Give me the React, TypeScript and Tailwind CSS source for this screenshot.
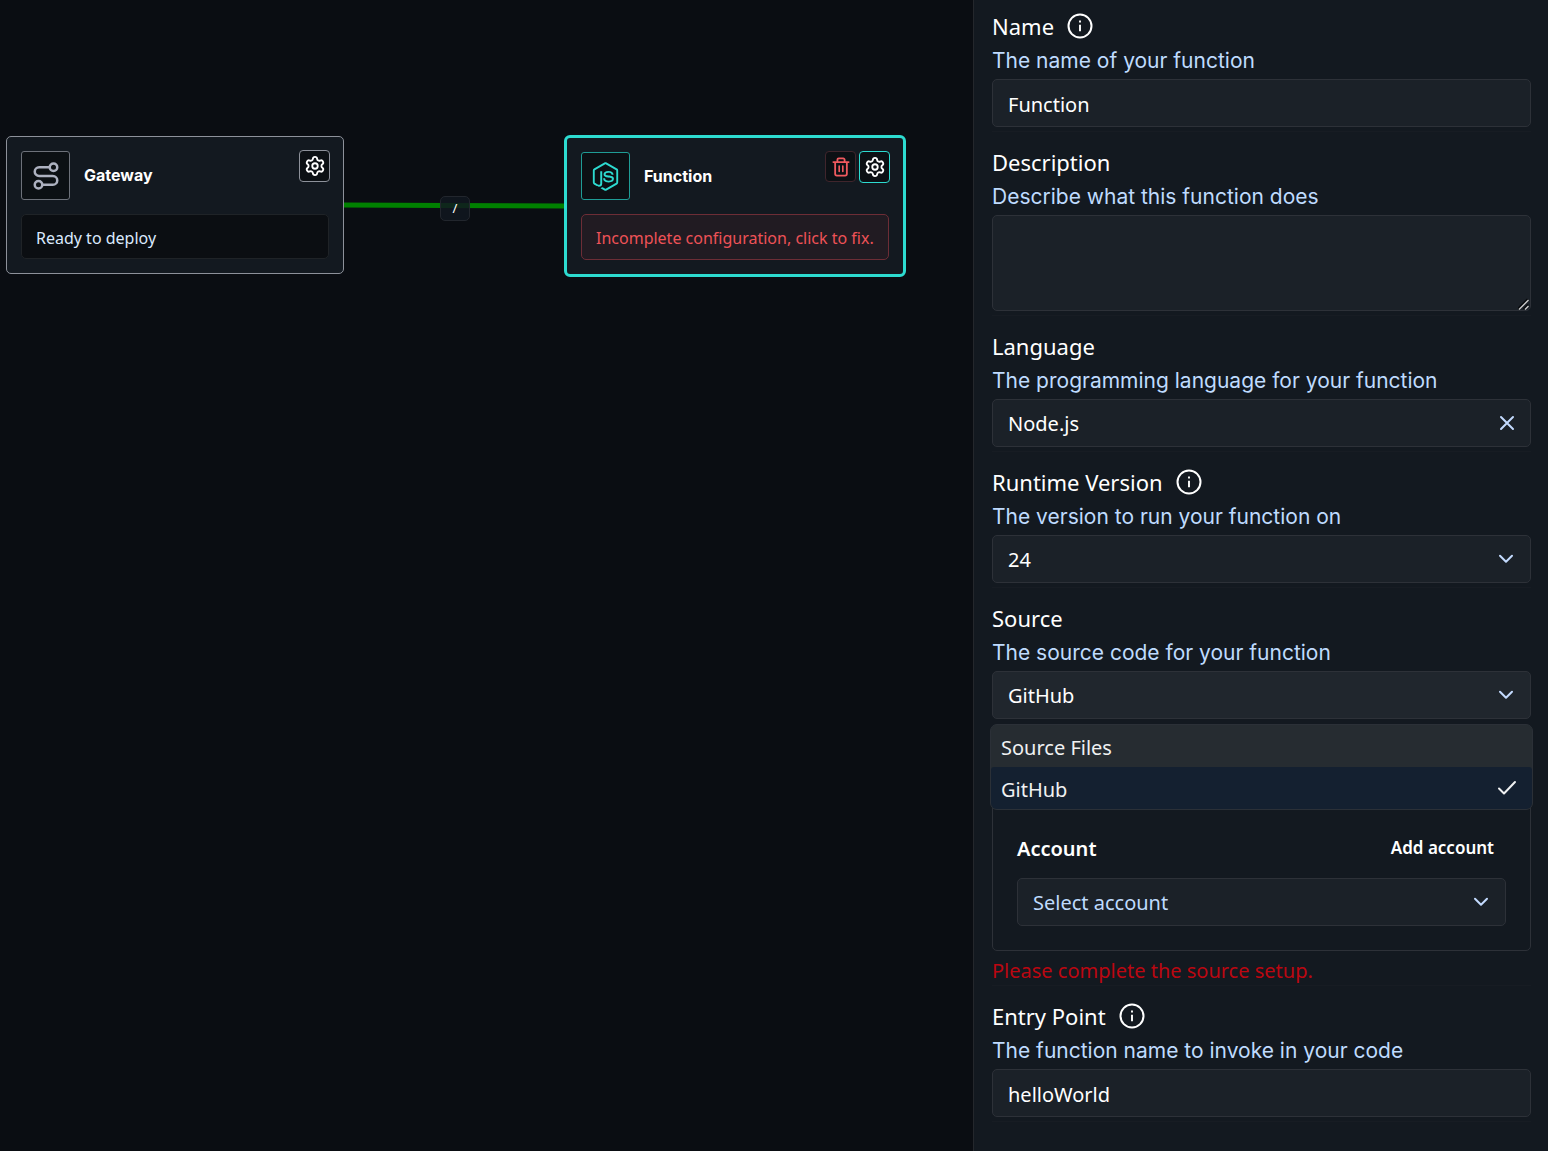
import { useState } from "react";
import type { ReactNode } from "react";
import { Route, Settings } from "lucide-react";
import { FaNodeJs } from "react-icons/fa";

const control =
  "block h-12 w-full appearance-none rounded-[5px] border border-[#2d3138] bg-[#1b2128] px-[15px] pt-[2px] font-['Noto_Sans',sans-serif] text-[20px] text-white outline-none";

function InfoIcon() {
  return (
    <svg viewBox="0 0 26 26" className="h-[26px] w-[26px]" fill="none" stroke="currentColor" strokeWidth="2" aria-hidden="true">
      <circle cx="13" cy="13" r="11.5" />
      <path d="M13 11.8v6.4M13 7.6v2" strokeWidth="1.9" />
    </svg>
  );
}

function Chevron() {
  return (
    <svg viewBox="0 0 16 10" className="pointer-events-none absolute top-[19px] right-[17px] h-[10px] w-4" fill="none" stroke="#c3dafe" strokeWidth="2" strokeLinecap="round" strokeLinejoin="round" aria-hidden="true">
      <path d="M2 1.8l6 6 6-6" />
    </svg>
  );
}

function Trash() {
  return (
    <svg viewBox="0 0 20 22" className="h-[20px] w-[18px]" fill="none" stroke="currentColor" strokeWidth="2" strokeLinecap="round" strokeLinejoin="round" aria-hidden="true">
      <path d="M1.5 5.5h17M6 5V3a1.5 1.5 0 0 1 1.5-1.5h5A1.5 1.5 0 0 1 14 3v2M3.5 5.5v13A2 2 0 0 0 5.5 20.5h9a2 2 0 0 0 2-2v-13" />
      <path d="M8 10v6M12 10v6" strokeWidth="1.8" />
    </svg>
  );
}

function Field({ id, label, hint, info, children }: { id: string; label: string; hint: string; info?: boolean; children: ReactNode }) {
  return (
    <div className="flex flex-col border-b border-[#171c23] pb-1">
      <div className="flex h-[34px] items-start gap-[13px]">
        <label htmlFor={id} className="font-['Noto_Sans',sans-serif] text-[22px] leading-[31px] text-white">
          {label}
        </label>
        {info && (
          <button type="button" aria-label={`About ${label}`} className="mt-[2px] text-white">
            <InfoIcon />
          </button>
        )}
      </div>
      <p className="h-[34px] font-['Inter',sans-serif] text-[21px] leading-[32px] text-[#bfdbfe]">{hint}</p>
      {children}
    </div>
  );
}

const sources = ["Source Files", "GitHub"];

export default function App() {
  const [source, setSource] = useState("GitHub");

  return (
    <div className="flex min-h-screen bg-[#0a0d12] font-['Noto_Sans',sans-serif] text-white">
      <main className="relative min-w-0 flex-1 overflow-hidden">
        <svg className="absolute top-[200px] left-[343px] h-3 w-[223px]" viewBox="0 0 223 12" preserveAspectRatio="none" aria-hidden="true">
          <path d="M0 5C80 5 140 6 223 6" stroke="#008000" strokeWidth="5" fill="none" />
        </svg>
        <div className="absolute top-[196px] left-[440px] flex h-[25px] w-[30px] items-center justify-center rounded-[5px] border border-[#22262d] bg-[#111820]/85 text-[13px]">
          /
        </div>

        <section className="absolute top-[136px] left-[6px] w-[338px] rounded-[5px] border border-[#8d919a] bg-[#131920] p-[14px]">
          <div className="flex h-[63px] items-start">
            <div className="flex h-[49px] w-[49px] items-center justify-center rounded-[3px] border border-[#6d717a] bg-[#0c1014] text-[#adb1c0]">
              <Route size={30} />
            </div>
            <h2 className="ml-[14px] flex-1 font-['Inter',sans-serif] text-[16px] leading-[48px] font-bold">Gateway</h2>
            <button type="button" aria-label="Gateway settings" className="-mt-px -mr-px flex h-8 w-[31px] items-center justify-center rounded-[4px] border border-[#8d919a] bg-[#0c1014]">
              <Settings size={22} />
            </button>
          </div>
          <div className="flex h-[45px] items-center rounded-[5px] border border-[#1f2327] bg-[#0b0e12] px-[14px] pt-[2px] text-[16px] text-[#dbeafe]">
            Ready to deploy
          </div>
        </section>

        <section className="absolute top-[135px] left-[564px] w-[342px] rounded-[6px] border-3 border-[#2ddbd0] bg-[#131920] p-[14px]">
          <div className="flex h-[62px] items-start">
            <div className="flex h-12 w-[49px] items-center justify-center rounded-[3px] border border-[#1f9c95] bg-[#0c1014] text-[#2ddbd0]">
              <FaNodeJs size={29} />
            </div>
            <h2 className="ml-[14px] flex-1 font-['Inter',sans-serif] text-[16px] leading-[48px] font-bold">Function</h2>
            <div className="-mt-px -mr-px flex gap-[3px]">
              <button type="button" aria-label="Delete function" className="flex h-[31px] w-[31px] items-center justify-center rounded-[4px] border border-[#40252c] bg-[#0c1014] text-[#f05a5f]">
                <Trash />
              </button>
              <button type="button" aria-label="Function settings" className="flex h-8 w-[31px] items-center justify-center rounded-[4px] border border-[#2ddbd0] bg-[#0c1014]">
                <Settings size={22} />
              </button>
            </div>
          </div>
          <button type="button" className="flex h-[46px] w-full items-center rounded-[5px] border border-[#6d2d36] bg-[#211b22] px-[14px] pt-[2px] text-[16px] whitespace-nowrap text-[#ee5257]">
            Incomplete configuration, click to fix.
          </button>
        </section>
      </main>

      <aside className="w-[575px] shrink-0 border-l border-[#24272c] bg-[#131920] pt-[11px] pr-[17px] pl-[18px]">
        <form className="flex flex-col gap-[15px]" onSubmit={(e) => e.preventDefault()}>
          <Field id="name" label="Name" hint="The name of your function" info>
            <input id="name" defaultValue="Function" className={control} />
          </Field>
          <Field id="description" label="Description" hint="Describe what this function does">
            <div className="relative">
              <textarea id="description" className="block h-24 w-full resize-none rounded-[5px] border border-[#2d3138] bg-[#1b2128] px-[15px] py-2 text-[20px] outline-none" />
              <svg viewBox="0 0 12 12" className="pointer-events-none absolute right-px bottom-px h-3 w-3" fill="none" aria-hidden="true">
                <path d="M0 10.500L9.500 1M5.500 11L10 6.500" stroke="#05070a" strokeWidth="1.5" />
                <path d="M1 11.500L10.500 2M7 11.500L10.500 8" stroke="#c8c8c8" strokeWidth="1.4" />
              </svg>
            </div>
          </Field>
          <Field id="language" label="Language" hint="The programming language for your function">
            <div className="relative">
              <select id="language" className={control}>
                <option>Node.js</option>
              </select>
              <button type="button" aria-label="Clear language" className="absolute top-4 right-4">
                <svg viewBox="0 0 16 16" className="h-4 w-4" stroke="#c3dafe" strokeWidth="2" strokeLinecap="round" aria-hidden="true">
                  <path d="M2 2l12 12M14 2l-12 12" />
                </svg>
              </button>
            </div>
          </Field>
          <Field id="runtime" label="Runtime Version" hint="The version to run your function on" info>
            <div className="relative">
              <select id="runtime" className={control}>
                <option>24</option>
              </select>
              <Chevron />
            </div>
          </Field>
          <Field id="source" label="Source" hint="The source code for your function">
            <div className="relative">
              <button id="source" type="button" aria-haspopup="listbox" aria-expanded="true" className="block h-12 w-full rounded-[5px] border border-[#2d3138] bg-[#20262d] px-[15px] pt-[2px] text-left text-[20px]">
                {source}
              </button>
              <Chevron />
              <div role="listbox" aria-label="Source" className="absolute top-[53px] -right-[2px] -left-[2px] z-10 overflow-hidden rounded-[7px] border border-[#2b3037] bg-[#262c31]">
                {sources.map((s) => (
                  <button
                    key={s}
                    type="button"
                    role="option"
                    aria-selected={s === source}
                    onClick={() => setSource(s)}
                    className="flex h-[42px] w-full items-center justify-between rounded-[3px] pr-[15px] pl-[10px] text-[20px] text-[#f0f1f2] aria-selected:bg-[#142030]"
                  >
                    <span className="pt-[3px]">{s}</span>
                    {s === source && (
                      <svg viewBox="0 0 20 16" className="h-4 w-5" fill="none" stroke="currentColor" strokeWidth="2" strokeLinecap="round" strokeLinejoin="round" aria-hidden="true">
                        <path d="M2 8.500l5 5L18 2" />
                      </svg>
                    )}
                  </button>
                ))}
              </div>
            </div>
            <div className="mt-2 rounded-[5px] border border-[#2d3138] px-6 pt-[90px] pb-6">
              <div className="flex h-[60px] items-center justify-between pr-3 font-semibold">
                <label htmlFor="account" className="pt-[2px] text-[20px]">Account</label>
                <button type="button" className="text-[17px]">Add account</button>
              </div>
              <div className="relative">
                <select id="account" className="block h-12 w-full appearance-none rounded-[5px] border border-[#2d3138] bg-[#1b2128] px-[15px] pt-[2px] text-[20px] text-[#bfdbfe] outline-none">
                  <option>Select account</option>
                </select>
                <Chevron />
              </div>
            </div>
            <p className="h-[30px] text-[20px] leading-[40px] text-[#bb0711]">Please complete the source setup.</p>
          </Field>
          <Field id="entry" label="Entry Point" hint="The function name to invoke in your code" info>
            <input id="entry" defaultValue="helloWorld" className={control} />
          </Field>
        </form>
      </aside>
    </div>
  );
}
